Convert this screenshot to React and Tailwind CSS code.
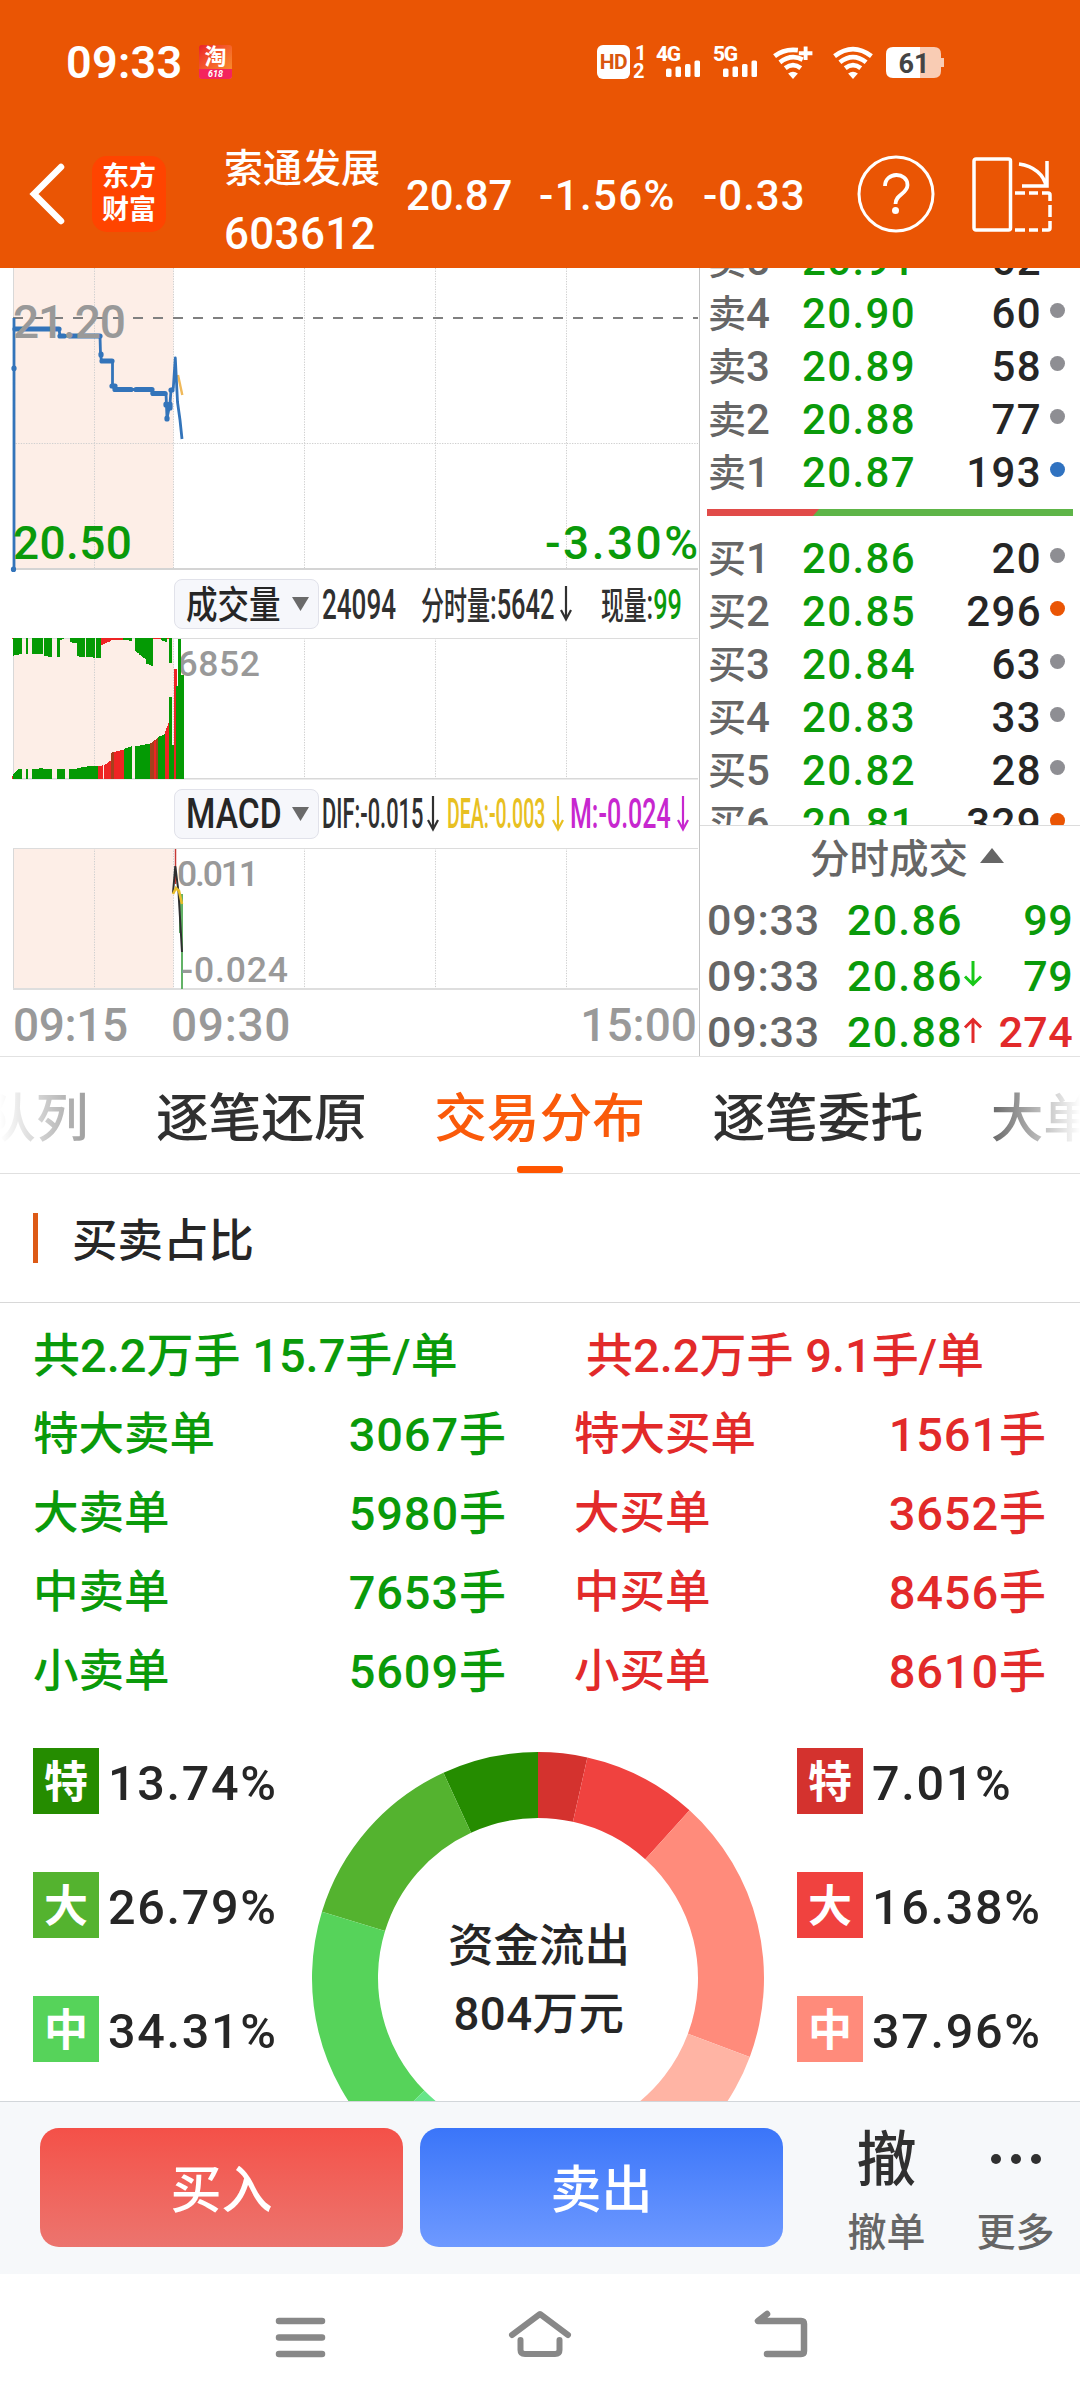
const FONT = "font-['Roboto','Noto_Sans_CJK_SC',sans-serif]";

const sells = [
    { label: '卖5', price: '20.91', qty: '62', dot: 'bg-[#8e8e93]' },
    { label: '卖4', price: '20.90', qty: '60', dot: 'bg-[#8e8e93]' },
    { label: '卖3', price: '20.89', qty: '58', dot: 'bg-[#8e8e93]' },
    { label: '卖2', price: '20.88', qty: '77', dot: 'bg-[#8e8e93]' },
    { label: '卖1', price: '20.87', qty: '193', dot: 'bg-[#3072c0]' },
];

const buys = [
    { label: '买1', price: '20.86', qty: '20', dot: 'bg-[#8e8e93]' },
    { label: '买2', price: '20.85', qty: '296', dot: 'bg-[#ea5504]' },
    { label: '买3', price: '20.84', qty: '63', dot: 'bg-[#8e8e93]' },
    { label: '买4', price: '20.83', qty: '33', dot: 'bg-[#8e8e93]' },
    { label: '买5', price: '20.82', qty: '28', dot: 'bg-[#8e8e93]' },
    { label: '买6', price: '20.81', qty: '329', dot: 'bg-[#ea5504]' },
];

const ticks = [
    { time: '09:33', price: '20.86', dir: null, qty: '99', color: 'text-[#0a9a0a]' },
    { time: '09:33', price: '20.86', dir: 'down', qty: '79', color: 'text-[#0a9a0a]' },
    { time: '09:33', price: '20.88', dir: 'up', qty: '274', color: 'text-[#e22a2a]' },
];

const orders = [
    ['特大卖单', '3067手', '特大买单', '1561手'],
    ['大卖单', '5980手', '大买单', '3652手'],
    ['中卖单', '7653手', '中买单', '8456手'],
    ['小卖单', '5609手', '小买单', '8610手'],
];

const sellShare = [
    { name: '特', value: 13.74, bg: 'bg-[#258c00]', fill: '#258c00' },
    { name: '大', value: 26.79, bg: 'bg-[#54b32f]', fill: '#54b32f' },
    { name: '中', value: 34.31, bg: 'bg-[#56d35a]', fill: '#56d35a' },
    { name: '小', value: 25.16, bg: 'bg-[#66e589]', fill: '#66e589' },
];

const buyShare = [
    { name: '特', value: 7.01, bg: 'bg-[#d4322e]', fill: '#d4322e' },
    { name: '大', value: 16.38, bg: 'bg-[#f0423f]', fill: '#f0423f' },
    { name: '中', value: 37.96, bg: 'bg-[#ff8b7b]', fill: '#ff8b7b' },
    { name: '小', value: 38.65, bg: 'bg-[#ffb4a4]', fill: '#ffb4a4' },
];

const G = '#049a04';
const R = '#ee2424';
const B = '#a5401c';

// [x0, x1, height at x0, height at x1, color], in thirds of a pixel
const hangingBars = [
    [37, 41, 3, 3, R], [40, 66, 53, 48, G], [77, 84, 49, 49, G], [95, 130, 47, 49, G], [131, 144, 53, 55, G],
    [145, 156, 56, 56, G], [171, 180, 58, 58, G], [180, 193, 6, 3, G], [210, 232, 12, 17, G], [232, 256, 55, 58, G],
    [258, 286, 57, 59, G], [287, 303, 60, 60, G], [303, 333, 22, 9, R], [333, 370, 5, 5, R], [370, 395, 5, 9, G],
    [406, 418, 40, 48, G], [418, 438, 50, 64, G], [438, 460, 76, 85, G], [460, 482, 3, 3, R], [482, 500, 6, 12, G],
    [500, 508, 4, 4, R], [508, 516, 76, 76, G],
];

const volumeBars = [
    [37, 41, 10, 10, R], [40, 56, 14, 30, G], [56, 66, 30, 30, G], [77, 84, 29, 29, G], [95, 104, 29, 29, G],
    [106, 128, 31, 32, G], [130, 156, 30, 29, G], [171, 194, 30, 30, G], [208, 240, 30, 32, G], [240, 262, 34, 37, G],
    [262, 295, 38, 39, G], [295, 310, 39, 41, R], [312, 333, 41, 56, R], [333, 343, 79, 81, B], [343, 372, 81, 88, R],
    [372, 396, 91, 98, G], [406, 450, 98, 106, G], [450, 475, 106, 124, B], [462, 468, 112, 118, R], [475, 494, 126, 134, G],
    [494, 508, 138, 174, R], [508, 516, 245, 245, G], [516, 522, 101, 101, G], [521, 530, 329, 329, R],
    [529, 535, 278, 278, G], [534, 543, 419, 419, G], [542, 551, 311, 311, G],
];

const Grid = ({ height }) => (
    <g>
        <rect x="13" y="0" width="160.5" height={height - 1} fill="#fdeee7" />
        <line x1="13.5" y1="0" x2="13.5" y2={height} stroke="#d8d8d8" />
        {[94.5, 173.5, 304.5, 435.5, 566.5].map(x => (
            <line key={x} x1={x} y1="0" x2={x} y2={height} stroke="#cfcfcf" strokeDasharray="1.3 1.3" />
        ))}
    </g>
);

const PriceChart = () => (
    <svg width="699" height="302" className="block overflow-visible">
        <Grid height={301} />
        <line x1="13" y1="175.5" x2="698" y2="175.5" stroke="#cfcfcf" strokeDasharray="1.3 1.3" />
        <line x1="13" y1="301" x2="698" y2="301" stroke="#d4d4d4" strokeWidth="2" />
        <line x1="13" y1="50" x2="698" y2="50" stroke="#808080" strokeWidth="2" strokeDasharray="10 10" />
        <path d="M178 107L182.3 127" stroke="#f0b95a" strokeWidth="2.4" fill="none" />
        <path
            d="M14 50V301M14.5 61H59L60 68H100L100.5 86L101.5 93H112.5V118L115 121.5H152V125.5H166L167 150L170 136L171 122L173.3 120L175.3 90L177.5 134L180 152L182 171"
            fill="none" stroke="#3374ba" strokeWidth="2.8" strokeLinejoin="round"
        />
        <path
            d="M15 61H59M60 68H64M70 68H100M101 86V87M102 93H112M112 118H115M115 121.5H131M136 121.5H152M153 125.5H165M166 136V137M167 150V151M170 136V140M14 100V100.5M13.5 301V301.5M171 122H172"
            fill="none" stroke="#3374ba" strokeWidth="5.2" strokeLinecap="round"
        />
        <text x="13" y="70" fontSize="46" fontWeight="500" fill="#999" textLength="113">21.20</text>
        <text x="13" y="291" fontSize="46" fontWeight="500" fill="#0a9a0a" textLength="119">20.50</text>
        <text x="545" y="291" fontSize="46" fontWeight="500" fill="#0a9a0a" textLength="153">-3.30%</text>
    </svg>
);

const VolumeChart = () => (
    <svg width="699" height="142" className="block">
        <Grid height={141} />
        <line x1="13" y1="0.5" x2="698" y2="0.5" stroke="#dcdcdc" />
        <line x1="13" y1="140.7" x2="698" y2="140.7" stroke="#d8d8d8" strokeWidth="1.6" />
        <text x="177.5" y="38" fontSize="35.5" fontWeight="500" fill="#999" textLength="82.5">6852</text>
        <g transform="scale(0.33333)" shapeRendering="crispEdges">
            {hangingBars.map(([x0, x1, h0, h1, c], i) => (
                <polygon key={i} points={`${x0},0 ${x1},0 ${x1},${h1} ${x0},${h0}`} fill={c} />
            ))}
            {volumeBars.map(([x0, x1, h0, h1, c], i) => (
                <polygon key={i} points={`${x0},423 ${x1},423 ${x1},${423 - h1} ${x0},${423 - h0}`} fill={c} />
            ))}
        </g>
    </svg>
);

const MacdChart = () => (
    <svg width="699" height="142" className="block">
        <Grid height={141} />
        <line x1="13" y1="0.5" x2="698" y2="0.5" stroke="#dcdcdc" />
        <line x1="13" y1="141" x2="698" y2="141" stroke="#dedede" strokeWidth="2" />
        <path d="M175.5 1V36" stroke="#c63a35" strokeWidth="1.5" />
        <path d="M180 46V85M182 46V141" stroke="#62b266" strokeWidth="2" />
        <path d="M173 45L175.3 18L178.5 44L182 104" stroke="#2f2f2f" strokeWidth="2" fill="none" />
        <path d="M173 46L176 40L179 43L182 56" stroke="#e8bd2a" strokeWidth="2.6" fill="none" />
        <text x="177" y="38" fontSize="35.5" fontWeight="500" fill="#999" textLength="82">0.011</text>
        <text x="181" y="134" fontSize="35.5" fontWeight="500" fill="#999" textLength="107">-0.024</text>
    </svg>
);

const IndicatorPill = ({ children }) => (
    <div className="flex h-[50px] w-[145px] shrink-0 items-center rounded-lg border border-[#e1e2ea] bg-[#f6f7fb] pl-[11px] text-[#262626]">
        <div className="w-[106px] whitespace-nowrap font-medium">{children}</div>
        <svg width="17" height="14" viewBox="0 0 17 14"><path d="M0 0H17L8.500 14Z" fill="#6a6a6a" /></svg>
    </div>
);

const ThinArrow = ({ color }) => (
    <svg width="12" height="36" viewBox="0 0 12 36" className="shrink-0">
        <path d="M6 0V33M1 24L6 33.500L11 24" fill="none" stroke={color} strokeWidth="2.2" />
    </svg>
);

const BookRow = ({ row }) => (
    <div className="flex h-[53px] items-center text-[42px] leading-none font-medium">
        <div className="flex w-[76px] items-center text-[#666]">
            <span className="text-[38px]">{row.label[0]}</span>
            <span>{row.label[1]}</span>
        </div>
        <div className="w-[150px] text-center tracking-[1.4px] text-[#0a9a0a]">{row.price}</div>
        <div className="w-[108px] text-right tracking-[1.4px] text-[#262626]">{row.qty}</div>
        <div className={`mb-1.5 ml-2 size-[15px] rounded-full ${row.dot}`} />
    </div>
);

const OrderBook = () => (
    <div className="flex w-[381px] flex-col overflow-hidden border-l border-[#c4c4c4]">
        <div className="h-[558px] shrink-0 overflow-hidden border-b border-[#dcdcdc] pl-2">
            <div className="-mt-[34px]">
                {sells.map(r => <BookRow key={r.label} row={r} />)}
            </div>
            <div className="mt-[10px] mb-[16px] -ml-px">
                <svg width="366" height="7" className="block">
                    <rect width="366" height="7" fill="#5eb548" />
                    <path d="M0 0H112L106 7H0Z" fill="#e14b49" />
                </svg>
            </div>
            {buys.map(r => <BookRow key={r.label} row={r} />)}
        </div>
        <div className="flex h-[66px] shrink-0 items-center justify-center gap-3 pt-0.5 pl-[34px] text-[39.5px] leading-none font-medium text-[#666]">
            分时成交
            <svg width="24" height="15" viewBox="0 0 24 15" className="mb-2.5"><path d="M12 0L24 15H0Z" fill="#666" /></svg>
        </div>
        {ticks.map((t, i) => (
            <div key={i} className="flex h-14 shrink-0 items-center pl-[7px] text-[43px] leading-none font-medium">
                <div className="w-[140px] tracking-[.8px] text-[#666]">{t.time}</div>
                <div className="w-[116px] tracking-[1.2px] text-[#0a9a0a]">{t.price}</div>
                <svg width="20" height="26" viewBox="0 0 20 26" className="mb-1">
                    {t.dir === 'down' && <path d="M10 0V23M2 15.500L10 23.500L18 15.500" fill="none" stroke="#19c819" strokeWidth="3" />}
                    {t.dir === 'up' && <path d="M10 26V2M2 10.500L10 2.500L18 10.500" fill="none" stroke="#e22a2a" strokeWidth="3" />}
                </svg>
                <div className={`w-[90px] text-right tracking-[.4px] ${t.color}`}>{t.qty}</div>
            </div>
        ))}
    </div>
);

const SignalBars = ({ label }) => (
    <div className="w-[57px]">
        <svg width="46" height="34" viewBox="0 0 46 34" className="block overflow-visible">
            <text x="0" y="16" fontSize="21" fontWeight="800" fill="#fff" textLength="25">{label}</text>
            <rect x="10" y="23.500" width="5.500" height="8.500" rx="1.500" fill="#fff" />
            <rect x="19.500" y="21.500" width="5.500" height="10.500" rx="1.500" fill="#fff" />
            <rect x="29" y="19" width="5.500" height="13" rx="1.500" fill="#fff" />
            <rect x="38.500" y="15.500" width="5.500" height="16.500" rx="1.500" fill="#fff" />
        </svg>
    </div>
);

const Wifi = ({ plus }) => (
    <svg width="42" height="33" viewBox="0 0 42 34" className="block">
        <g fill="none" stroke="#fff" strokeWidth="4.800">
            <path d={plus ? 'M2 10.500Q12 2.500 26 4.300' : 'M2 10.500Q21 -4 40 10.500'} />
            <path d={plus ? 'M7.500 16.800Q19 8 31 14' : 'M7.500 16.800Q21 6 34.500 16.800'} />
            <path d="M13 22.800Q21 16.500 29 22.800" />
        </g>
        <path d="M16 28.300Q21 25 26 28.300L21 34Z" fill="#fff" />
        {plus && <path d="M27 7.500H41M34 0.500V14.500" stroke="#fff" strokeWidth="4" />}
    </svg>
);

const StatusBar = () => (
    <div className="flex h-[124px] items-center pl-[66px] text-white">
        <div className="w-[133px] text-[45px] leading-none font-semibold tracking-[.3px]">09:33</div>
        <div className="flex h-[34px] w-[33px] flex-col items-center overflow-hidden rounded-[3px] bg-gradient-to-br from-[#ea1b2b] via-[#f5622a] to-[#f79a2c]">
            <div className="h-[24px] text-[22px] leading-[24px] font-bold">淘</div>
            <div className="h-[10px] w-full bg-[#f4245e] text-center text-[9px] leading-[10px] font-bold italic">618</div>
        </div>
        <div className="ml-[365px] flex h-[34px] items-center">
            <div className="flex h-[34px] w-[33px] items-center justify-center rounded-md bg-white text-[21px] leading-none font-bold tracking-tight text-[#d9560f]">HD</div>
            <div className="ml-[3px] flex w-[23px] flex-col text-[20px] leading-[18px] font-bold">
                <span className="pl-0.5">1</span>
                <span>2</span>
            </div>
            <SignalBars label="4G" />
            <SignalBars label="5G" />
            <div className="ml-[2px] w-[60px]"><Wifi plus /></div>
            <div className="w-[54px]"><Wifi /></div>
            <svg width="60" height="32" viewBox="0 0 60 32" className="mt-0.5">
                <path d="M7 0H34V31H7Q0 31 0 24V7Q0 0 7 0Z" fill="#fff" />
                <path d="M34 0H48Q55 0 55 7V11H58V20H55V24Q55 31 48 31H34Z" fill="#fff" opacity=".7" />
                <text x="28" y="25.500" fontSize="27" fontWeight="700" fill="#444" textAnchor="middle">61</text>
            </svg>
        </div>
    </div>
);

const Header = () => (
    <div className="h-[268px] shrink-0 bg-[#ea5504]">
        <StatusBar />
        <div className="flex h-[139px] items-center text-[42px] leading-none font-medium text-white">
            <svg width="36" height="62" viewBox="0 0 36 62" className="ml-[29px]">
                <path d="M32 4L5 31L32 58" fill="none" stroke="#fff" strokeWidth="6.500" strokeLinecap="round" />
            </svg>
            <div className="ml-[27px] flex h-[76px] w-[74px] flex-col items-center justify-center rounded-[15px] bg-[#ff4400] text-[27px] leading-[33px] font-bold">
                <div>东方</div>
                <div>财富</div>
            </div>
            <div className="mt-[16px] ml-[58px] w-[182px]">
                <div className="h-[65px] text-[39px] leading-[56px] whitespace-nowrap">索通发展</div>
                <div className="h-[56px] text-[44px] leading-[56px] tracking-[.3px]">603612</div>
            </div>
            <div className="mt-[5px] w-[133px] tracking-[-.2px]">20.87</div>
            <div className="mt-[5px] w-[164px] tracking-[1.4px]">-1.56%</div>
            <div className="mt-[5px] w-[154px] tracking-[1px]">-0.33</div>
            <svg width="78" height="78" viewBox="0 0 78 78">
                <circle cx="39" cy="39" r="37" fill="none" stroke="#fff" strokeWidth="3" />
                <path d="M28 31C28 16.500 50.500 16.500 50.500 30C50.500 39 38.500 39 38.500 49" fill="none" stroke="#fff" strokeWidth="3.800" />
                <circle cx="38.500" cy="55.500" r="3.500" fill="#fff" />
            </svg>
            <svg width="82" height="78" viewBox="0 0 82 78" className="mt-1 ml-[37px]" fill="none" stroke="#fff" strokeWidth="3.500">
                <rect x="2" y="2" width="36.500" height="71" rx="2" />
                <path d="M47 7C62 9 72 18 74 29M75 4V29H50" />
                <path d="M43 36H53M57 36H66M70 36H76Q78 36 78 38V44M78 48V60M78 64V71Q78 73 76 73H70M66 73H57M53 73H43" />
            </svg>
        </div>
    </div>
);

const Donut = () => {
    const point = (deg, r) => {
        const a = (deg * Math.PI) / 180;
        return `${226 + r * Math.sin(a)} ${226 - r * Math.cos(a)}`;
    };

    // each side takes half of the ring: sells run anticlockwise, buys clockwise
    const slices = (items, dir) => {
        let from = 0;
        return items.map(s => {
            const to = from + dir * s.value * 1.8;
            const sweep = dir > 0 ? 1 : 0;
            const d = `M${point(from, 226)}A226 226 0 0 ${sweep} ${point(to, 226)}L${point(to, 160)}A160 160 0 0 ${1 - sweep} ${point(from, 160)}Z`;
            from = to;
            return <path key={s.fill} d={d} fill={s.fill} />;
        });
    };

    return (
        <div className="grid h-[452px] w-[452px] shrink-0 place-items-center">
            <svg width="452" height="452" className="col-start-1 row-start-1">
                {slices(sellShare, -1)}
                {slices(buyShare, 1)}
            </svg>
            <div className="col-start-1 row-start-1 pt-1.5 pl-0.5 text-center text-[45.5px] leading-[68px] font-medium text-[#262626]">
                <div>资金流出</div>
                <div className="tracking-[.5px]">804万元</div>
            </div>
        </div>
    );
};

const Legend = ({ items }) => (
    <div className="flex w-[279px] flex-col gap-[58px]">
        {items.map(s => (
            <div key={s.name} className="flex h-[66px] items-center">
                <div className={`flex size-[66px] items-center justify-center pt-1 text-[44px] leading-none font-bold text-white ${s.bg}`}>{s.name}</div>
                <div className="ml-[9px] pt-[7px] text-[48.5px] leading-none font-medium tracking-[1.7px] text-[#262626]">{s.value}%</div>
            </div>
        ))}
    </div>
);

const App = () => {
    return (
        <div className={`flex h-[2400px] w-[1080px] flex-col overflow-hidden bg-white ${FONT}`} lang="zh-CN">
            <Header />

            <div className="flex h-[789px] shrink-0 border-b border-[#e2e2e2]">
                <div className="w-[699px]">
                    <PriceChart />
                    <div className="flex h-[68px] items-center pl-[174px] leading-none font-medium text-[#303030]">
                        <IndicatorPill>
                            <div className="origin-left scale-x-[.83] pt-0.5 text-[38px]">成交量</div>
                        </IndicatorPill>
                        <div className="ml-[3px] w-[99px] pt-0.5 whitespace-nowrap"><div className="origin-left scale-x-[.62] text-[42px]">24094</div></div>
                        <div className="flex w-[139px] items-center pt-0.5 whitespace-nowrap">
                            <div className="origin-left scale-x-[.605] text-[38px]">分时量<span className="text-[42px]">:5642</span></div>
                        </div>
                        <ThinArrow color="#303030" />
                        <div className="ml-[29px] w-[90px] pt-0.5 whitespace-nowrap">
                            <div className="origin-left scale-x-[.6] text-[38px]">现量<span className="text-[42px]">:<span className="text-[#0a9a0a]">99</span></span></div>
                        </div>
                    </div>
                    <VolumeChart />
                    <div className="flex h-[68px] items-center pl-[174px] text-[42px] leading-none font-medium text-[#303030]">
                        <IndicatorPill>
                            <div className="origin-left scale-x-[.8]">MACD</div>
                        </IndicatorPill>
                        <div className="ml-[3px] w-[105px] whitespace-nowrap"><div className="w-[197px] origin-left scale-x-[.52]">DIF:-0.015</div></div>
                        <ThinArrow color="#303030" />
                        <div className="ml-[8px] w-[105px] whitespace-nowrap text-[#e8c022]"><div className="w-[220px] origin-left scale-x-[.465]">DEA:-0.003</div></div>
                        <ThinArrow color="#e8c022" />
                        <div className="ml-[6px] w-[107px] whitespace-nowrap text-[#c727cf]"><div className="w-[175px] origin-left scale-x-[.595]">M:-0.024</div></div>
                        <ThinArrow color="#c727cf" />
                    </div>
                    <MacdChart />
                    <div className="flex h-[66px] items-center pt-1 pl-[13px] text-[46px] leading-none font-medium text-[#999]">
                        <div className="w-[158px] tracking-[-.4px]">09:15</div>
                        <div className="tracking-[.7px]">09:30</div>
                        <div className="mr-0.5 ml-auto">15:00</div>
                    </div>
                </div>
                <OrderBook />
            </div>

            {/* Tab strip, scrolled so that both ends are cut off */}
            <div className="relative h-[117px] shrink-0 overflow-hidden border-b border-[#e0e0e0]">
                <div className="-ml-[17px] flex h-[125px] w-[1300px] items-center gap-[67.5px] text-[52.7px] leading-none font-medium whitespace-nowrap text-[#303030]">
                    <span>队列</span>
                    <span>逐笔还原</span>
                    <span className="text-[#fa5a0a]">交易分布</span>
                    <span>逐笔委托</span>
                    <span>大单</span>
                </div>
                <div className="absolute top-0 left-0 h-full w-[130px] bg-gradient-to-r from-white to-white/30" />
                <div className="absolute top-0 right-0 h-full w-[110px] bg-gradient-to-l from-white to-white/10" />
                <div className="absolute bottom-0 left-[517px] h-[7px] w-[46px] rounded-[3px] bg-[#ff5500]" />
            </div>

            <div className="flex h-[129px] shrink-0 items-center border-b border-[#d8d8d8] pl-[33px]">
                <div className="h-[50px] w-[5px] bg-[#dd5a16]" />
                <h2 className="ml-[34px] pt-2 text-[45.5px] leading-none font-medium text-[#262626]">买卖占比</h2>
            </div>

            <div className="h-[445px] shrink-0 text-[45.5px] leading-none font-medium">
                <div className="mt-[12px] flex h-[80px] items-center pl-[33px] text-[47px]">
                    <div className="w-[553px] text-[#0a9a0a]">共2.2万手 15.7手/单</div>
                    <div className="text-[#e22a2a]">共2.2万手 9.1手/单</div>
                </div>
                {orders.map(([sell, sellQty, buy, buyQty]) => (
                    <div key={sell} className="flex h-[79px] items-center pr-[33px] pl-[33px]">
                        <div className="flex w-[474px] items-center justify-between text-[#0a9a0a]">
                            <span>{sell}</span>
                            <span className="text-[47px] tracking-[.9px]">{sellQty}</span>
                        </div>
                        <div className="ml-[67px] flex w-[473px] items-center justify-between text-[#e22a2a]">
                            <span>{buy}</span>
                            <span className="text-[47px] tracking-[.9px]">{buyQty}</span>
                        </div>
                    </div>
                ))}
            </div>

            <div className="flex h-[353px] shrink-0 items-start overflow-hidden pl-[33px]">
                <Legend items={sellShare.slice(0, 3)} />
                <div className="mt-1"><Donut /></div>
                <div className="ml-[33px]"><Legend items={buyShare.slice(0, 3)} /></div>
            </div>

            <div className="flex h-[173px] shrink-0 border-t border-[#d2d6da] bg-[#f6f8fa] pt-[26px] pl-10 leading-none font-medium">
                <button className="h-[119px] w-[363px] rounded-[19px] bg-gradient-to-b from-[#f45048] to-[#ec746e] pt-1.5 text-[51px] text-white">买入</button>
                <button className="ml-[17px] h-[119px] w-[363px] rounded-[19px] bg-gradient-to-b from-[#3a75f9] to-[#6e99ff] pt-1.5 text-[51px] text-white">卖出</button>
                <div className="ml-[39px] flex w-[129px] flex-col items-center pt-[3px] text-[#303030]">
                    <div className="h-[83px] text-[60px]">撤</div>
                    <div className="text-[39px] text-[#666]">撤单</div>
                </div>
                <div className="flex w-[129px] flex-col items-center pt-[3px]">
                    <div className="flex h-[83px] gap-[10px] pt-[23px]">
                        <div className="size-[10px] rounded-full bg-[#303030]" />
                        <div className="size-[10px] rounded-full bg-[#303030]" />
                        <div className="size-[10px] rounded-full bg-[#303030]" />
                    </div>
                    <div className="text-[39px] text-[#666]">更多</div>
                </div>
            </div>

            <div className="flex h-[126px] shrink-0 items-start bg-white pt-[34px] pl-[274px]">
                <svg width="53" height="52" viewBox="0 0 53 52" fill="none" stroke="#888" strokeWidth="6.500" strokeLinecap="round">
                    <path d="M5 13H48M5 29.500H48M5 46H48" />
                </svg>
                <svg width="66" height="52" viewBox="0 0 66 52" className="ml-[180px]" fill="none" stroke="#888" strokeWidth="6" strokeLinecap="round" strokeLinejoin="round">
                    <path d="M5 27L33 6L61 27" />
                    <path d="M13.500 32V42Q13.500 46 18 46H48Q52.500 46 52.500 42V32" />
                </svg>
                <svg width="58" height="52" viewBox="0 0 58 52" className="ml-[180px]" fill="none" stroke="#888" strokeWidth="6.500" strokeLinecap="round" strokeLinejoin="round">
                    <path d="M14 6L5 13H48Q51 13 51 16V43Q51 46 48 46H14" />
                </svg>
            </div>
        </div>
    );
};

export default App;
